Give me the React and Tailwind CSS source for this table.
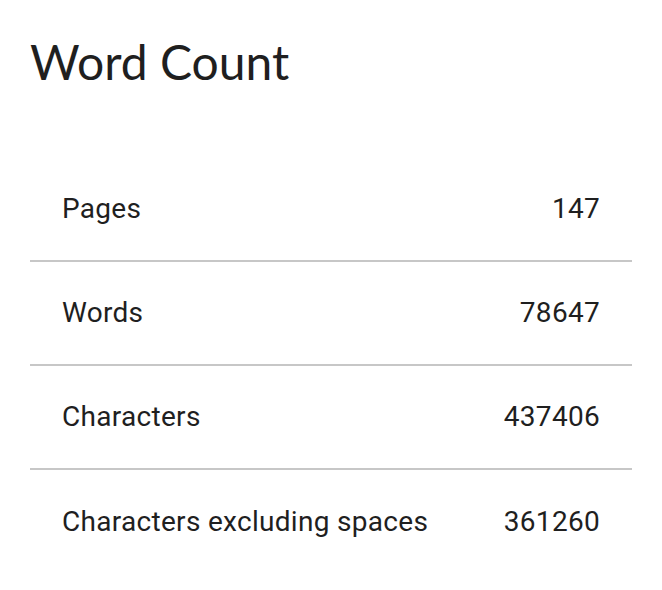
import React from "react";

const rows = [
  { label: "Pages", value: "147" },
  { label: "Words", value: "78647" },
  { label: "Characters", value: "437406" },
  { label: "Characters excluding spaces", value: "361260" },
];

const App = () => {
  return (
    <div className="w-[662px] h-[590px] bg-white text-[#1f1f1f] px-[30px] pt-[32px]">
      <h1 className="text-[48px] leading-[60px] font-normal" style={{ fontFamily: "Lato, 'Open Sans', sans-serif" }}>
        Word Count
      </h1>
      <div className="mt-[66px] font-['Roboto',sans-serif]">
        {rows.map((row, i) => (
          <div
            key={row.label}
            className={`flex items-center justify-between h-[104px] px-[32px] text-[28px] tracking-[0.3px] ${
              i < rows.length - 1 ? "border-b-2 border-[#c7c7c7]" : ""
            }`}
          >
            <span>{row.label}</span>
            <span>{row.value}</span>
          </div>
        ))}
      </div>
    </div>
  );
};

export default App;
